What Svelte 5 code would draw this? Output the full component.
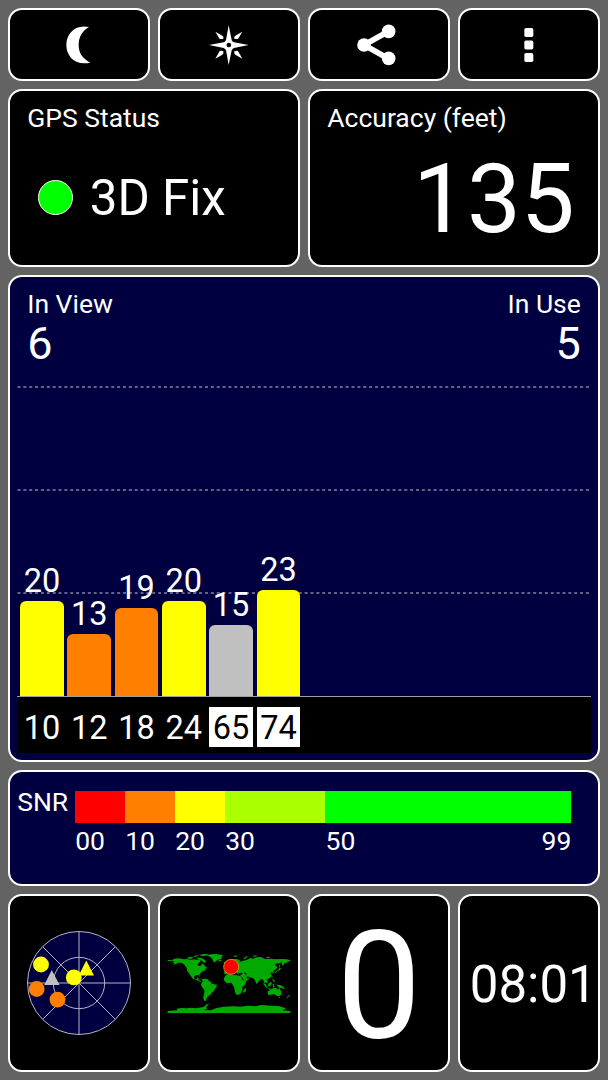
<script lang="ts">
  type Satellite = { id: number; snr: number; level: number; color: string; sbas?: boolean };

  // level is the bar height in px, snr is the rounded label
  const satellites: Satellite[] = [
    { id: 10, snr: 20, level: 95, color: '#ffff00' },
    { id: 12, snr: 13, level: 62, color: '#ff8000' },
    { id: 18, snr: 19, level: 88, color: '#ff8000' },
    { id: 24, snr: 20, level: 95, color: '#ffff00' },
    { id: 65, snr: 15, level: 71, color: '#c0c0c0', sbas: true },
    { id: 74, snr: 23, level: 105.5, color: '#ffff00', sbas: true },
  ];

  const scale = [
    { label: '00', width: 50, color: '#ff0000' },
    { label: '10', width: 50, color: '#ff8000' },
    { label: '20', width: 50, color: '#ffff00' },
    { label: '30', width: 100.3, color: '#aaff00' },
    { label: '50', width: 246.4, color: '#00ff00' },
  ];

  const inUse = 5;
</script>

<main class="screen">
  <button class="panel tool" aria-label="Night mode">
    <svg width="50" height="50" viewBox="161 58 150 150" fill="#fff">
      <path d="M266 79C222 70 198 101 198 133C198 165 222 196 270 186C246 174 235 156 235 133C235 109 246 90 266 79Z" />
    </svg>
  </button>
  <button class="panel tool" aria-label="Compass">
    <svg width="50" height="50" viewBox="611 58 150 150" fill="#fff">
      <path d="M685 74L694 118Q696 123 701 125L745 133L701 142Q696 144 694 149L685 193L677 149Q675 144 670 142L626 133L670 125Q675 123 677 118Z" />
      <path d="M645 93L666 105Q671 108 669 114Q664 116 658 115Z" />
      <path d="M726 93L705 105Q700 108 702 114Q707 116 713 115Z" />
      <path d="M645 174L666 162Q671 159 669 152Q664 149 658 151Z" />
      <path d="M726 174L705 162Q700 159 702 152Q707 149 713 151Z" />
      <circle cx="685.5" cy="133" r="7" fill="#000" />
    </svg>
  </button>
  <button class="panel tool" aria-label="Share">
    <svg width="50" height="50" viewBox="149 58 150 150" fill="#fff">
      <path d="M253 92L179 133L253 174" fill="none" stroke="#fff" stroke-width="17" />
      <circle cx="179" cy="133" r="20.5" />
      <circle cx="253" cy="92" r="20.5" />
      <circle cx="253" cy="173" r="20.5" />
    </svg>
  </button>
  <button class="panel tool" aria-label="Menu">
    <svg width="50" height="50" viewBox="599 58 150 150" fill="#fff">
      <rect x="660" y="82" width="27" height="27" rx="5" />
      <rect x="660" y="119.5" width="27" height="27" rx="5" />
      <rect x="660" y="157" width="27" height="27" rx="5" />
    </svg>
  </button>

  <section class="panel half reading">
    <div class="title">GPS Status</div>
    <div class="status">
      <span class="lamp"></span>
      <span>3D Fix</span>
    </div>
  </section>
  <section class="panel half reading">
    <div class="title">Accuracy (feet)</div>
    <div class="accuracy">135</div>
  </section>

  <section class="panel full navy chart">
    <header class="counts">
      <div>
        <div class="title">In View</div>
        <div class="count">{satellites.length}</div>
      </div>
      <div class="right">
        <div class="title">In Use</div>
        <div class="count">{inUse}</div>
      </div>
    </header>
    <div class="plot">
      <svg class="grid" width="573" height="329" fill="none" stroke="#8484a2" stroke-width="1.3" stroke-dasharray="3 2.86">
        <path d="M0.5 20H573M0.5 123H573M0.5 226H573" />
      </svg>
      {#each satellites as sat}
        <div class="column">
          <span class="snr">{sat.snr}</span>
          <div class="bar" style="height: {sat.level}px; background: {sat.color}"></div>
        </div>
      {/each}
    </div>
    <div class="ids">
      {#each satellites as sat}
        <span class="id" class:sbas={sat.sbas}>{sat.id}</span>
      {/each}
    </div>
  </section>

  <section class="panel full navy legend">
    <span class="legend-name">SNR</span>
    <div class="scale">
      {#each scale as step, i}
        <div style="width: {step.width}px">
          <div class="swatch" style="background: {step.color}"></div>
          <div class="ticks">
            <span>{step.label}</span>
            {#if i === scale.length - 1}<span>99</span>{/if}
          </div>
        </div>
      {/each}
    </div>
  </section>

  <section class="panel widget">
    <svg width="106" height="106" viewBox="-53 -53 106 106">
      <g fill="#000040" stroke="#b4b4c4" stroke-width="1">
        <circle r="51.5" />
        <circle r="25.7" />
        <path d="M-51.5 0H51.5M0 -51.5V51.5M-36.4 -36.4L36.4 36.4M-36.4 36.4L36.4 -36.4" />
      </g>
      <g fill="#ff8000">
        <circle cx="-42.3" cy="6" r="7.9" />
        <circle cx="-21.5" cy="16.6" r="7.9" />
      </g>
      <path d="M-27.2 -13L-19.5 1.9H-34.8Z" fill="#c0c0c0" />
      <g fill="#ffff00">
        <circle cx="-38" cy="-18.5" r="7.9" />
        <circle cx="-5.2" cy="-5.6" r="7.9" />
        <path d="M7.3 -22.5L15 -7.4H-0.3Z" />
      </g>
    </svg>
  </section>

  <section class="panel widget">
    <svg class="map" width="126" height="62" viewBox="17 39 378 186">
      <g fill="#00aa00">
        <!-- Americas -->
        <path d="M22 60L37 61L39 57L55 55L71 58L80 57L92 59L103 58L112 61L119 58L121 63L116 68L112 74L116 78L122 77L124 71L130 73L134 79L141 84L134 87L136 91L127 94L121 99L117 105L118 110L114 105L107 105L101 110L103 117L109 118L111 113L116 113L114 120L120 122L122 128L126 128L121 127L114 123L106 119L98 117L92 109L86 100L81 94L79 84L73 75L65 69L54 68L45 73L36 76L43 71L37 67L42 63L22 63Z" />
        <path d="M125 118L132 116L141 117L146 123L152 126L154 131L169 134L169 140L164 146L160 154L154 158L149 166L143 169L139 175L136 184L130 181L129 171L132 158L132 149L126 143L122 135L124 128L127 124Z" />
        <path d="M80 53L89 50L99 52L94 56L83 56ZM100 48L113 45L111 49L103 51ZM109 53L121 53L133 59L137 66L133 69L124 62L112 58ZM115 45L132 42L146 42L139 46L127 49ZM116 117L124 116L129 118L122 118Z" />
        <path d="M137 47L151 43L168 42L187 45L184 52L184 56L175 59L168 62L164 67L159 65L156 58L151 52L145 49ZM174 61L180 59L184 61L181 64L175 64Z" />
        <!-- Eurasia -->
        <path d="M194 102L191 100L191 94L198 94L196 88L205 84L209 78L207 70L204 73L202 69L208 63L217 57L229 57L239 61L238 66L245 63L256 61L264 58L269 54L277 56L292 51L304 52L313 57L330 56L345 58L365 57L378 58L389 60L390 63L382 65L378 69L371 70L369 77L364 74L365 67L356 70L347 71L344 76L351 80L348 87L342 91L338 94L342 100L336 98L332 96L330 101L335 106L331 112L325 116L319 118L323 125L319 130L316 126L314 129L318 136L321 141L315 136L311 127L309 120L303 117L296 122L292 129L288 131L283 119L276 113L268 112L261 108L259 112L265 114L266 117L257 124L249 127L242 115L239 108L242 104L233 103L228 98L222 99L218 94L212 94L206 98L200 102Z" />
        <!-- Africa -->
        <path d="M197 104L212 100L218 106L229 105L240 109L248 123L258 125L253 134L246 142L246 153L239 163L229 165L224 157L222 144L216 133L213 128L200 130L193 124L190 118L193 110Z" />
        <path d="M255 143L258 148L254 157L249 158L249 152ZM198 75L203 78L206 83L198 87L200 80ZM189 66L197 65L198 69L191 70ZM218 48L228 46L232 48L224 51ZM249 56L255 50L265 48L258 53L252 58ZM277 47L288 46L290 49L280 50ZM316 51L326 50L330 53L320 54Z" />
        <path d="M358 82L362 86L358 91L351 94L345 99L342 98L347 94L353 91ZM357 73L360 80L356 80ZM336 108L338 111L335 113ZM307 128L315 134L321 142L319 144L311 136ZM320 145L334 146L338 149L327 149ZM323 131L333 125L334 130L330 139L324 139ZM337 132L344 131L340 135L343 141L338 143ZM335 116L341 119L344 127L340 126ZM348 134L359 135L369 140L374 147L365 145L356 143Z" />
        <path d="M322 154L331 150L337 145L343 143L349 145L353 150L357 143L363 155L364 162L357 169L348 167L342 162L333 164L324 165L322 159ZM354 171L359 171L357 175ZM386 164L388 167L384 171L377 176L380 171Z" />
        <!-- Antarctica -->
        <path d="M22 213L51 211L49 206L63 204L79 205L91 203L106 205L126 202L134 199L136 194L147 191L143 196L138 200L140 206L130 210L151 211L169 204L190 200L218 199L243 200L261 197L274 198L286 199L302 195L334 197L354 198L373 203L377 206L366 211L390 213V219H22Z" />
      </g>
      <path d="M233 101L239 98L247 99L246 103L239 104ZM251 96L258 99L258 106L254 103ZM241 108L247 114L252 123L247 119ZM258 111L264 115L260 116Z" fill="#000" />
      <circle cx="212.5" cy="80.5" r="22.5" fill="#ff0000" stroke="#e89018" stroke-width="2.5" />
    </svg>
  </section>

  <section class="panel widget speed">0</section>
  <section class="panel widget clock">08:01</section>
</main>

<style>
  :global(body) {
    margin: 0;
    background: #636363;
  }

  .screen {
    box-sizing: border-box;
    width: 608px;
    height: 1080px;
    padding: 8px 8.2px;
    display: grid;
    grid-template-columns: repeat(4, 1fr);
    grid-template-rows: 73px 177.5px 487.5px 115.7px 178px;
    gap: 8px 8.5px;
    background: #636363;
    color: #fff;
    font-family: Roboto, sans-serif;
    font-size: 26.5px;
    overflow: hidden;
  }

  .panel {
    box-sizing: border-box;
    min-width: 0;
    margin: 0;
    border: 2px solid #fff;
    border-radius: 14px;
    background: #000;
    white-space: nowrap;
  }

  .navy { background: #000040; }
  .half { grid-column: span 2; }
  .full { grid-column: span 4; }

  .tool,
  .widget {
    display: flex;
    align-items: center;
    justify-content: center;
    padding: 0;
  }

  .title { line-height: 30px; }

  .reading {
    display: flex;
    flex-direction: column;
    padding: 12px 23px 2px 17px;
  }

  .status,
  .accuracy {
    flex: 1;
    display: flex;
    align-items: center;
  }

  .status {
    gap: 16.5px;
    padding-left: 11px;
    font-size: 49.3px;
  }

  .lamp {
    box-sizing: border-box;
    width: 35px;
    height: 35px;
    border: 1px solid #fff;
    border-radius: 50%;
    background: #00ff00;
  }

  .accuracy {
    justify-content: flex-end;
    padding-top: 3px;
    font-size: 96px;
    line-height: 1;
  }

  .chart { padding: 12px 7px 0; }

  .counts {
    display: flex;
    justify-content: space-between;
    padding: 0 10px;
  }

  .right { text-align: right; }
  .count { font-size: 45px; line-height: 49px; margin-bottom: -1px; }

  .plot {
    position: relative;
    box-sizing: border-box;
    height: 330px;
    display: flex;
    align-items: flex-end;
    gap: 3.8px;
    padding-left: 3px;
    border-bottom: 1px solid #a0a0a0;
  }

  .grid {
    position: absolute;
    top: 0;
    left: 0;
  }

  .column {
    position: relative;
    width: 43.5px;
    text-align: center;
  }

  .snr {
    display: block;
    font-size: 32.5px;
    line-height: 39px;
  }

  .bar { border-radius: 6px 6px 0 0; }

  .ids {
    display: flex;
    align-items: center;
    gap: 3.8px;
    height: 56px;
    padding-left: 3px;
    background: #000;
  }

  .id {
    box-sizing: border-box;
    width: 43.5px;
    height: 40px;
    margin-top: 5px;
    padding-top: 1px;
    font-size: 32.5px;
    line-height: 40px;
    text-align: center;
  }

  .id.sbas {
    background: #fff;
    color: #000;
  }

  .legend {
    display: flex;
    padding: 19px 0 0 7px;
  }

  .legend-name {
    width: 57.5px;
    line-height: 21px;
  }

  .scale { display: flex; }
  .swatch { height: 32px; }

  .ticks {
    display: flex;
    justify-content: space-between;
    padding: 3px 0 0 0.5px;
    line-height: 30px;
  }

  .map { margin-top: 2px; }

  .speed {
    padding-top: 7px;
    font-size: 151px;
    line-height: 1;
  }

  .clock {
    justify-content: flex-start;
    padding: 3px 0 0 9.5px;
    font-size: 51px;
  }
</style>
